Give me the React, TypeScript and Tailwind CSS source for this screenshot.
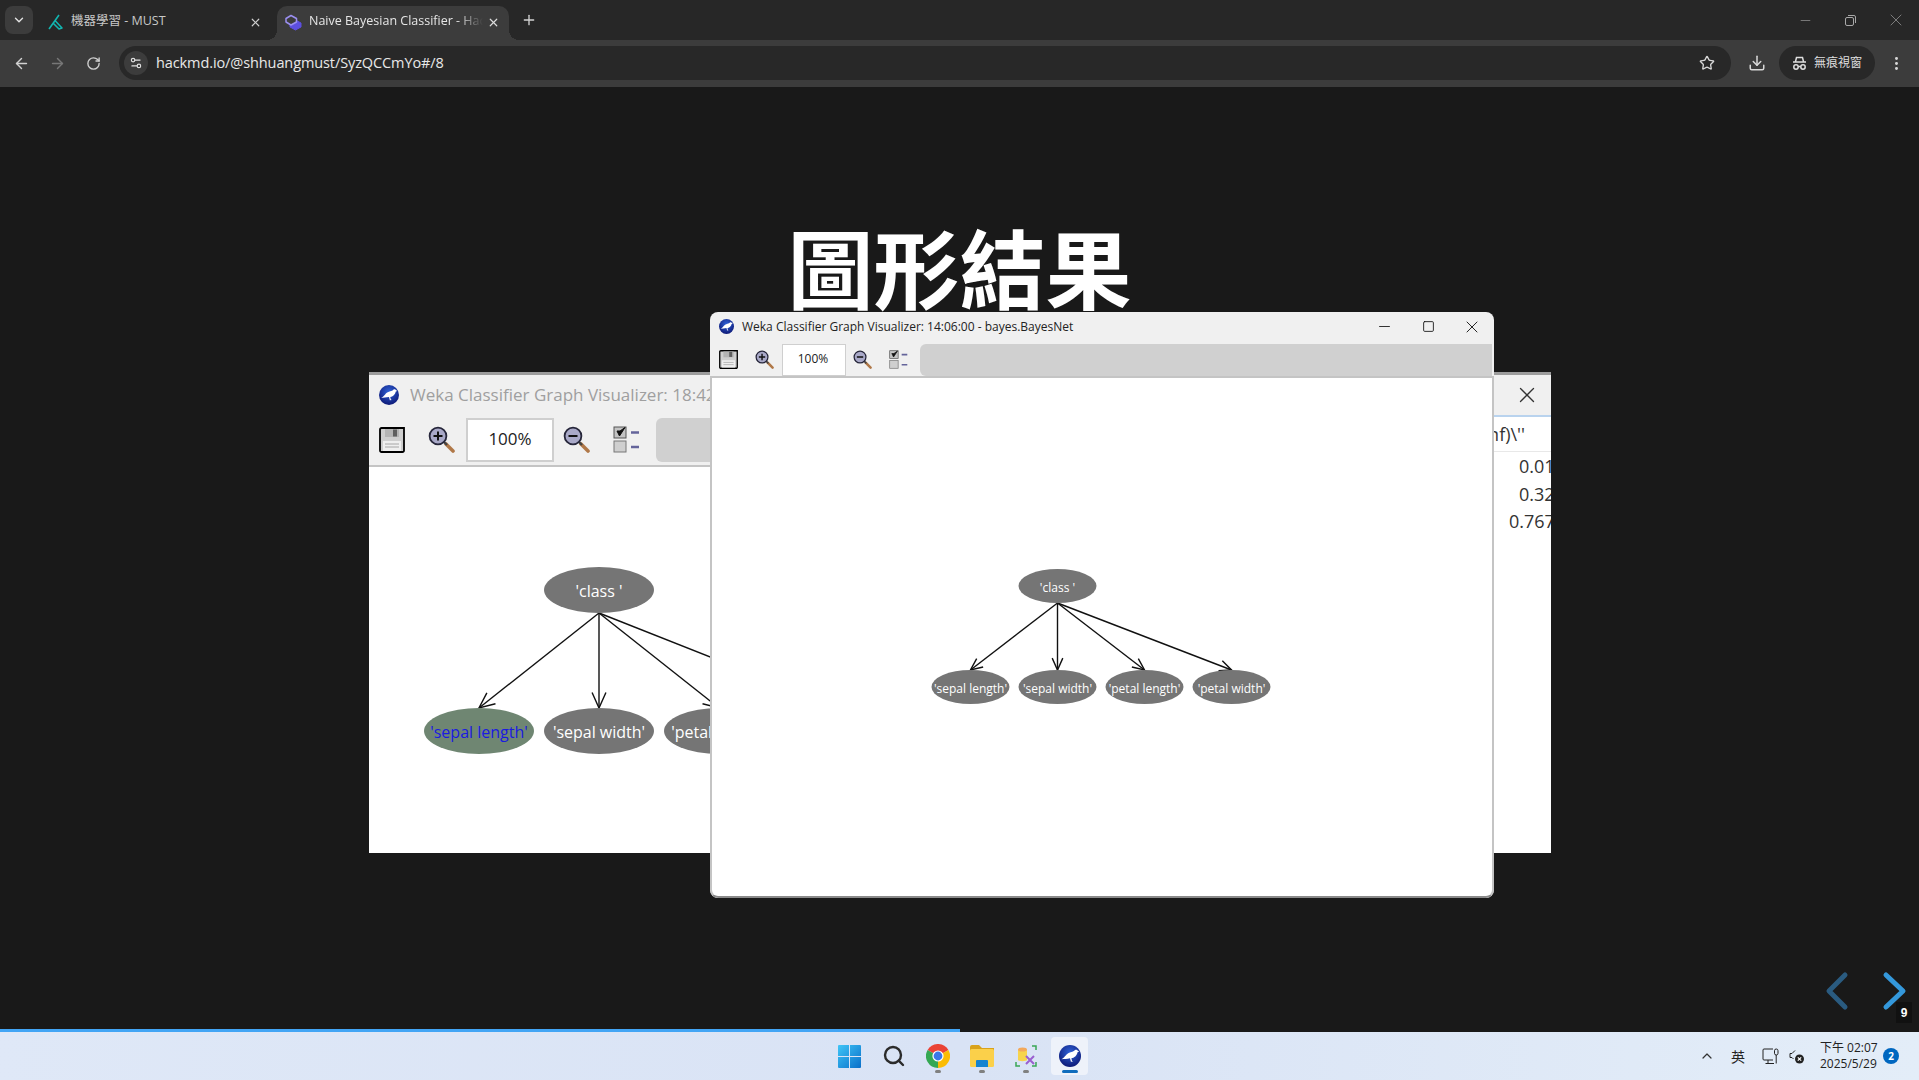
import { ArrowLeft, ArrowRight, RotateCw, Star, Download, EllipsisVertical, Plus, X, ChevronDown, ChevronUp, Minus, Square, Settings2, Search } from "lucide-react";

const UI_FONT = "font-['Open_Sans','Noto_Sans_CJK_TC',sans-serif]";

const WekaIcon = ({ size }: { size: number }) => (
  <svg width={size} height={size} viewBox="0 0 24 24" className="shrink-0">
    <defs>
      <radialGradient id="wekaBg" cx="50%" cy="35%" r="70%">
        <stop offset="0%" stopColor="#2f62d8" />
        <stop offset="100%" stopColor="#0b1470" />
      </radialGradient>
    </defs>
    <circle cx="12" cy="12" r="12" fill="url(#wekaBg)" />
    <path d="M2.5 15.5C6 14.5 7 10.5 10.5 8.8C13.5 7.2 16 7.2 17.5 5.4C18.6 4.7 20 5.2 20.6 6.3L22 7.2L20.2 7.8C19.6 11.5 16.5 14 13.5 14.4L14.2 17.5L15.6 18L13 18.2L12 14.5C8.5 15.2 5.5 15.3 2.5 15.5Z" fill="#fff" />
  </svg>
);

const SaveIcon = ({ size }: { size: number }) => (
  <svg width={size} height={size} viewBox="0 0 26 26" className="shrink-0">
    <path d="M1 2.5A1.5 1.5 0 0 1 2.5 1H25V23.5A1.5 1.5 0 0 1 23.5 25H2.5A1.5 1.5 0 0 1 1 23.5Z" fill="#cfcfcf" stroke="#000" strokeWidth="1.8" />
    <rect x="6" y="2" width="14" height="8" fill="#b4b4b4" />
    <rect x="14" y="2.5" width="4" height="7" fill="#5f5f5f" />
    <rect x="4" y="14" width="18" height="10" fill="#efefef" />
    <path d="M6 17H20M6 20H20" stroke="#a6a6a6" strokeWidth="1" />
  </svg>
);

const ZoomIcon = ({ size, plus }: { size: number; plus?: boolean }) => (
  <svg width={size} height={size} viewBox="0 0 27 27" className="shrink-0">
    <path d="M18 18L25 25" stroke="#b07848" strokeWidth="3.6" strokeLinecap="round" />
    <path d="M16 16L19 19" stroke="#444" strokeWidth="2.4" />
    <circle cx="10" cy="10" r="8.4" fill="#a9a9c8" stroke="#26263a" strokeWidth="1.8" />
    <path d="M5.5 10H14.5" stroke="#111" strokeWidth="2" />
    {plus && <path d="M10 5.5V14.5" stroke="#111" strokeWidth="2" />}
  </svg>
);

const ChecksIcon = ({ size }: { size: number }) => (
  <svg width={size} height={size} viewBox="0 0 27 27" className="shrink-0">
    <rect x="1" y="1" width="12" height="11" fill="#c4c4c4" stroke="#555" />
    <path d="M4 5L6.5 10L12 1.5L7 5Z" fill="#111" stroke="#111" />
    <rect x="1" y="15" width="12" height="11" fill="#cfcfcf" stroke="#777" />
    <path d="M18 6.5H26M18 21H26" stroke="#64649a" strokeWidth="2.4" />
  </svg>
);

const Edge = ({ x1, y1, x2, y2, head }: { x1: number; y1: number; x2: number; y2: number; head: number }) => {
  const a = Math.atan2(y2 - y1, x2 - x1);
  const hx1 = x2 - head * Math.cos(a - 0.42);
  const hy1 = y2 - head * Math.sin(a - 0.42);
  const hx2 = x2 - head * Math.cos(a + 0.42);
  const hy2 = y2 - head * Math.sin(a + 0.42);
  return (
    <g stroke="#111" strokeWidth="1.4" fill="none">
      <path d={`M${x1} ${y1}L${x2} ${y2}`} />
      <path d={`M${hx1} ${hy1}L${x2} ${y2}L${hx2} ${hy2}`} />
    </g>
  );
};

const Node = ({ cx, cy, rx, ry, label, size, fill = "#757575", color = "#ffffff" }: { cx: number; cy: number; rx: number; ry: number; label: string; size: number; fill?: string; color?: string }) => (
  <g>
    <ellipse cx={cx} cy={cy} rx={rx} ry={ry} fill={fill} />
    <text x={cx} y={cy + size * 0.36 + 1.5} textAnchor="middle" fontSize={size} fill={color} fontFamily="'Open Sans', sans-serif">
      {label}
    </text>
  </g>
);

const FrontGraph = () => (
  <svg width="780" height="520" viewBox="711.5 378 780 520" className="block">
    <Edge x1={1057} y1={603} x2={970} y2={670} head={13} />
    <Edge x1={1057} y1={603} x2={1057} y2={670} head={13} />
    <Edge x1={1057} y1={603} x2={1144} y2={670} head={13} />
    <Edge x1={1057} y1={603} x2={1231} y2={670} head={13} />
    <Node cx={1057} cy={586} rx={39} ry={17} label="'class '" size={12} />
    <Node cx={970} cy={687} rx={39} ry={17} label="'sepal length'" size={12} />
    <Node cx={1057} cy={687} rx={39} ry={17} label="'sepal width'" size={12} />
    <Node cx={1144} cy={687} rx={39} ry={17} label="'petal length'" size={12} />
    <Node cx={1231} cy={687} rx={39} ry={17} label="'petal width'" size={12} />
  </svg>
);

const BackGraph = () => (
  <svg width="1125" height="386" viewBox="369 467 1125 386" className="block">
    <Edge x1={599} y1={613} x2={479} y2={708} head={17} />
    <Edge x1={599} y1={613} x2={599} y2={708} head={17} />
    <Edge x1={599} y1={613} x2={719} y2={708} head={17} />
    <Edge x1={599} y1={613} x2={839} y2={708} head={17} />
    <Node cx={599} cy={590} rx={55} ry={23} label="'class '" size={16} />
    <Node cx={479} cy={731} rx={55} ry={23} label="'sepal length'" size={16} fill="#6f8672" color="#1a1ae0" />
    <Node cx={599} cy={731} rx={55} ry={23} label="'sepal width'" size={16} />
    <Node cx={719} cy={731} rx={55} ry={23} label="'petal length'" size={16} />
  </svg>
);

const BackWindow = () => (
  <div className={`absolute left-[369px] top-[285px] flex h-[481px] w-[1182px] overflow-hidden border-t-[3px] border-[#9c9c9c] bg-white ${UI_FONT}`}>
    <span className="absolute -top-[3px] left-[148px] h-[3px] w-[60px] bg-[#e0962a]" />
    <span className="absolute -top-[3px] left-[92px] h-[3px] w-[7px] bg-[#555]" />
    <div className="flex flex-1 flex-col">
      <div className="flex h-[42px] items-center gap-[11px] bg-[#f0f0f0] pb-[2px] pl-[10px]">
        <WekaIcon size={20} />
        <span className="whitespace-nowrap text-[17px] text-[#9f9f9f]">Weka Classifier Graph Visualizer: 18:42:</span>
      </div>
      <div className="flex h-[50px] items-center border-b-2 border-[#c4c4c4] bg-[#f0f0f0] pb-[3px] pl-[10px]">
        <SaveIcon size={26} />
        <span className="ml-[23px]"><ZoomIcon size={27} plus /></span>
        <span className="ml-[11px] flex h-[44px] w-[88px] items-center justify-center border-2 border-[#cfcfcf] bg-white pb-[2px] text-[17px] text-[#222]">100%</span>
        <span className="ml-[9px]"><ZoomIcon size={27} /></span>
        <span className="ml-[23px]"><ChecksIcon size={27} /></span>
        <span className="ml-[16px] h-[44px] flex-1 rounded-l-md bg-[#d0d0d0]" />
      </div>
      <BackGraph />
    </div>
    <div className="flex w-[57px] flex-col text-[18px] text-[#333]">
      <div className="flex h-[42px] items-center justify-center border-b-2 border-[#b9d3ee] bg-[#f0f0f0] pl-[9px]">
        <X size={26} strokeWidth={1.2} className="text-[#333]" />
      </div>
      <div className="flex h-[35px] items-center justify-end border-b border-[#e8e8e8] pr-[26px] whitespace-nowrap">nf)\''</div>
      <div className="whitespace-nowrap pl-[25px] leading-[28px]">0.0133</div>
      <div className="whitespace-nowrap pl-[25px] leading-[28px]">0.3267</div>
      <div className="whitespace-nowrap pl-[15px] leading-[27px]">0.7676</div>
    </div>
  </div>
);

const FrontWindow = () => (
  <div className={`absolute left-[710px] top-[225px] flex h-[586px] w-[784px] flex-col overflow-hidden rounded-lg bg-[#f0f0f0] ${UI_FONT}`}>
    <div className="flex h-[31px] items-center pb-[2px] pl-[9px]">
      <WekaIcon size={15} />
      <span className="ml-[8px] flex-1 whitespace-nowrap text-[12px] text-[#222]">Weka Classifier Graph Visualizer: 14:06:00 - bayes.BayesNet</span>
      <span className="flex w-[44px] justify-center"><Minus size={17} strokeWidth={1.2} className="text-[#111]" /></span>
      <span className="flex w-[44px] justify-center"><Square size={13} strokeWidth={1.6} className="text-[#111]" /></span>
      <span className="flex w-[44px] justify-center"><X size={20} strokeWidth={1.1} className="text-[#111]" /></span>
    </div>
    <div className="flex h-[33px] items-center pl-[9px] pr-[2px]">
      <SaveIcon size={19} />
      <span className="ml-[17px]"><ZoomIcon size={19} plus /></span>
      <span className="ml-[8px] flex h-[32px] w-[64px] items-center justify-center border border-[#cfcfcf] bg-white pb-[1px] pr-[2px] text-[12px] text-[#222]">100%</span>
      <span className="ml-[7px]"><ZoomIcon size={19} /></span>
      <span className="ml-[17px]"><ChecksIcon size={19} /></span>
      <span className="ml-[12px] h-[32px] flex-1 rounded-l-md bg-[#d0d0d0]" />
    </div>
    <div className="flex-1 overflow-hidden rounded-b-lg border-x-2 border-b-2 border-t-2 border-x-[#c4c4c4] border-t-[#c4c4c4] border-b-[#8a8a8a] bg-white">
      <FrontGraph />
    </div>
  </div>
);

const Tabs = () => (
  <div className={`flex h-[40px] items-end bg-[#272727] pl-[5px] text-[12.5px] ${UI_FONT}`}>
    <div className="mb-[6px] flex h-[28px] w-[28px] items-center justify-center rounded-lg bg-[#3c3c3c]">
      <ChevronDown size={14} strokeWidth={2.4} className="text-[#e4e4e4]" />
    </div>
    <div className="mb-[2px] flex h-[32px] w-[244px] items-center pl-[15px] text-[#c8c8c8]">
      <svg width="16" height="16" viewBox="0 0 16 16" className="shrink-0" fill="none" stroke="#12b5b0" strokeWidth="1.6" strokeLinejoin="round">
        <path d="M11 1L1 15M7 6.5L14 14L11 15L5 9" />
      </svg>
      <span className="ml-[7px] flex-1 whitespace-nowrap pb-[2px]">機器學習 - MUST</span>
      <X size={13} strokeWidth={2.2} className="mr-[15px] text-[#cfcfcf]" />
    </div>
    <div className="relative flex h-[34px] w-[232px] items-center rounded-t-[10px] bg-[#3c3c3c] pl-[8px] text-[#e6e6e6] before:absolute before:bottom-0 before:-left-[10px] before:size-[10px] before:bg-[radial-gradient(circle_at_0_0,transparent_10px,#3c3c3c_10px)] after:absolute after:-right-[10px] after:bottom-0 after:size-[10px] after:bg-[radial-gradient(circle_at_100%_0,transparent_10px,#3c3c3c_10px)]">
      <svg width="17" height="17" viewBox="0 0 17 17" className="shrink-0 -translate-y-[1px]" fill="none" strokeLinejoin="round">
        <path d="M5 9.5L10.5 6L16 9V13L10.5 16L5 13Z" fill="#5d4fe0" stroke="#5d4fe0" />
        <path d="M1 4.5L6 1.5L11.5 4.5V8L6 11L1 8Z" fill="#3c3c3c" stroke="#9b8ff0" strokeWidth="1.5" />
      </svg>
      <span className="ml-[7px] w-[174px] overflow-hidden whitespace-nowrap pb-[4px] [mask-image:linear-gradient(to_right,black_85%,transparent)]">Naive Bayesian Classifier - HackMD</span>
      <X size={13} strokeWidth={2.2} className="ml-[4px] -translate-y-[1px] text-[#dcdcdc]" />
    </div>
    <Plus size={16} strokeWidth={2} className="mb-[12px] ml-[12px] text-[#d4d4d4]" />
    <div className="flex-1" />
    <div className="mb-[10px] flex items-center text-[#a8a8a8]">
      <Minus size={15} strokeWidth={1} className="mr-[32px]" />
      <svg width="11" height="11" viewBox="0 0 11 11" fill="none" stroke="currentColor" className="mr-[30px]">
        <rect x="0.5" y="2.5" width="8" height="8" rx="1.5" />
        <path d="M3 .5H9A1.5 1.5 0 0 1 10.5 2V8" />
      </svg>
      <X size={20} strokeWidth={0.8} className="mr-[13px]" />
    </div>
  </div>
);

const AddressBar = () => (
  <div className={`flex h-[47px] items-center bg-[#3c3c3c] pb-[1px] ${UI_FONT}`}>
    <ArrowLeft size={17} strokeWidth={2} className="ml-[13px] text-[#d2d2d2]" />
    <ArrowRight size={17} strokeWidth={2} className="ml-[19px] text-[#777]" />
    <RotateCw size={15} strokeWidth={2.2} className="ml-[20px] text-[#cfcfcf]" />
    <div className="ml-[18px] flex h-[34px] w-[1612px] items-center rounded-full bg-[#282828] pl-[5px] pr-[16px]">
      <span className="flex h-[24px] w-[24px] items-center justify-center rounded-full bg-[#3c3c3c]">
        <Settings2 size={14} className="text-[#e0e0e0]" />
      </span>
      <span className="ml-[8px] flex-1 whitespace-nowrap pb-[1px] text-[14.5px] tracking-[-0.1px] text-[#e8e8e8]">hackmd.io/@shhuangmust/SyzQCCmYo#/8</span>
      <Star size={16} strokeWidth={2} className="text-[#d8d8d8]" />
    </div>
    <Download size={18} strokeWidth={2} className="ml-[17px] text-[#d8d8d8]" />
    <div className="ml-[13px] flex h-[34px] w-[96px] items-center rounded-full bg-[#282828] pl-[13px]">
      <svg width="15" height="15" viewBox="0 0 15 15" fill="none" stroke="#dedede" strokeWidth="1.5" className="shrink-0">
        <path d="M3.5 5.5L4.5 1.5H10.5L11.5 5.5M1 6H14" />
        <circle cx="4" cy="11" r="2.2" />
        <circle cx="11" cy="11" r="2.2" />
        <path d="M6.2 10.5H8.8" />
      </svg>
      <span className="ml-[7px] whitespace-nowrap text-[12px] text-[#dedede]">無痕視窗</span>
    </div>
    <EllipsisVertical size={17} strokeWidth={2.2} className="ml-[13px] text-[#d8d8d8]" />
  </div>
);

const SlideNav = () => (
  <div className="absolute bottom-[0px] right-[0px] h-[62px] w-[100px]">
    <svg width="100" height="62" viewBox="0 0 100 62" fill="none" strokeWidth="5" strokeLinecap="round" strokeLinejoin="round">
      <path d="M26 8L10 24L26 40" stroke="#2a5b80" />
      <path d="M67 8L84 24L67 40" stroke="#3498db" />
    </svg>
    <span className="absolute right-[7px] top-[35px] flex h-[21px] w-[16px] items-center justify-center bg-[#111] font-['Liberation_Sans',sans-serif] text-[12px] font-bold text-white">9</span>
  </div>
);

const TaskbarIcons = () => (
  <div className="absolute left-[838px] top-[5px] flex h-[38px] items-center">
    <svg width="23" height="23" viewBox="0 0 23 23">
      <defs>
        <linearGradient id="winTile" x1="0" y1="0" x2="1" y2="1">
          <stop offset="0%" stopColor="#3fc5f7" />
          <stop offset="100%" stopColor="#0a6fc9" />
        </linearGradient>
      </defs>
      <path d="M0 1A1 1 0 0 1 1 0H11V11H0ZM12 0H22A1 1 0 0 1 23 1V11H12ZM0 12H11V23H1A1 1 0 0 1 0 22ZM12 12H23V22A1 1 0 0 1 22 23H12Z" fill="url(#winTile)" />
    </svg>
    <Search size={24} strokeWidth={2.4} className="ml-[21px] text-[#2b2b2b]" />
    <svg width="24" height="24" viewBox="0 0 24 24" className="ml-[20px]">
      <path d="M12 12L22.4 6A12 12 0 0 0 1.6 6Z" fill="#ea4335" />
      <path d="M12 12L1.6 6A12 12 0 0 0 12 24Z" fill="#34a853" />
      <path d="M12 12L12 24A12 12 0 0 0 22.4 6Z" fill="#fbbc04" />
      <circle cx="12" cy="12" r="5.6" fill="#fff" />
      <circle cx="12" cy="12" r="4.4" fill="#3b78e7" />
    </svg>
    <svg width="24" height="22" viewBox="0 0 24 22" className="ml-[20px]">
      <path d="M0 2A2 2 0 0 1 2 0H9L12 3H24V8H0Z" fill="#d9a21b" />
      <rect y="4" width="24" height="18" rx="1.5" fill="#fbd04a" />
      <path d="M7 15H17A1 1 0 0 1 18 16V22H6V16A1 1 0 0 1 7 15Z" fill="#1583d1" />
    </svg>
    <svg width="22" height="22" viewBox="0 0 22 22" fill="none" className="ml-[21px]">
      <path d="M3 5C3 3.5 12 3.5 12 5V15C12 16.5 3 16.5 3 15Z" fill="#f7d44c" />
      <ellipse cx="7.5" cy="4.5" rx="4.5" ry="2" fill="#f3a95b" />
      <path d="M17 1H21V5M1 17V21H5M21 17V21H17" stroke="#3aa655" strokeWidth="1.5" />
      <path d="M11 11L19 19M19 11L11 19" stroke="#9a5fd0" strokeWidth="2" />
    </svg>
    <div className="ml-[14px] flex h-[38px] w-[37px] items-center justify-center rounded bg-[#eef2fa]">
      <WekaIcon size={22} />
    </div>
    <span className="absolute left-[97px] top-[33px] h-[3px] w-[6px] rounded-full bg-[#808080]" />
    <span className="absolute left-[141px] top-[33px] h-[3px] w-[6px] rounded-full bg-[#808080]" />
    <span className="absolute left-[185px] top-[33px] h-[3px] w-[6px] rounded-full bg-[#808080]" />
    <span className="absolute left-[224px] top-[33px] h-[3px] w-[16px] rounded-full bg-[#0f6cbd]" />
  </div>
);

const Tray = () => (
  <div className={`absolute right-[0px] top-[0px] flex h-full items-center text-[#222] ${UI_FONT}`}>
    <ChevronUp size={16} strokeWidth={1.8} className="text-[#333]" />
    <span className="ml-[16px] text-[14px]">英</span>
    <svg width="17" height="17" viewBox="0 0 17 17" fill="none" stroke="#222" strokeWidth="1" className="ml-[17px]">
      <path d="M11 1H2A1 1 0 0 0 1 2V11A1 1 0 0 0 2 12H11M6 12V15.5M3.5 15.5H12" />
      <rect x="12.5" y="1" width="3.5" height="6" rx="1.7" />
      <path d="M14.2 7V15.5" />
    </svg>
    <svg width="15" height="15" viewBox="0 0 15 15" className="ml-[10px]">
      <path d="M6 1.5L3 4.5H1V8.5H3L4.5 10" fill="none" stroke="#222" strokeWidth="1" />
      <circle cx="10.5" cy="10" r="4.5" fill="#222" />
      <path d="M8.8 8.3L12.2 11.7M12.2 8.3L8.8 11.7" stroke="#fff" strokeWidth="1.2" />
    </svg>
    <div className="ml-[16px] flex w-[58px] flex-col items-start text-[12px] leading-[16px]">
      <span className="whitespace-nowrap">下午 02:07</span>
      <span className="whitespace-nowrap">2025/5/29</span>
    </div>
    <span className="ml-[5px] mr-[20px] flex h-[16px] w-[16px] items-center justify-center rounded-full bg-[#0067c0] text-[10px] font-bold text-white">2</span>
  </div>
);

export default function App() {
  return (
    <div className="flex h-[1080px] w-[1919px] flex-col overflow-hidden bg-[#191919]">
      <Tabs />
      <AddressBar />
      <main className="relative flex-1 overflow-hidden">
        <h1 className="pt-[124px] text-center font-['Noto_Sans_CJK_TC',sans-serif] text-[86px] font-bold leading-[110px] text-white">圖形結果</h1>
        <BackWindow />
        <FrontWindow />
        <SlideNav />
      </main>
      <div className="h-[3px] bg-[#191919]">
        <div className="h-full w-[960px] bg-[#42a5f5]" />
      </div>
      <footer className="relative h-[48px] bg-gradient-to-r from-[#dfe8f7] via-[#d9e3f5] to-[#e3edf8]">
        <TaskbarIcons />
        <Tray />
      </footer>
    </div>
  );
}
